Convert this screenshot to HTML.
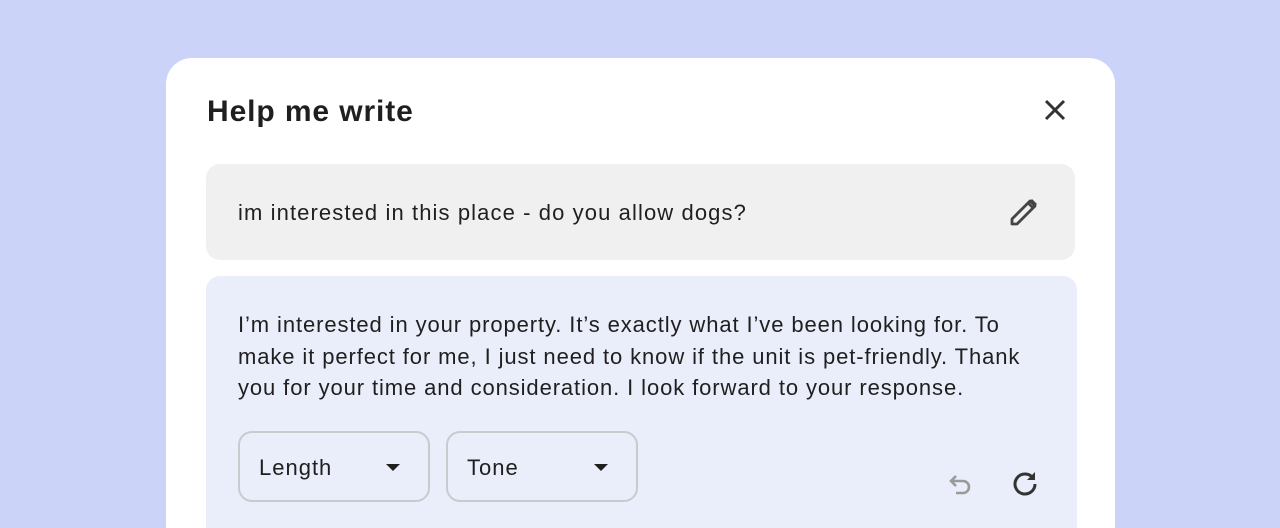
<!DOCTYPE html>
<html><head><style>
html,body{margin:0;width:1280px;height:528px;overflow:hidden}
body{background:#cbd3f9;font-family:"Liberation Sans",sans-serif;position:relative}
.card{position:absolute;left:166px;top:58px;width:949px;height:470px;background:#fff;border-radius:26px 26px 0 0}
.title{position:absolute;left:207px;top:95px;font-size:30px;font-weight:bold;color:#1f1f1f;letter-spacing:0.9px}
.inp{position:absolute;left:206px;top:164px;width:869px;height:96px;background:#f0f0f0;border-radius:14px}
.inp span{position:absolute;left:32px;top:36px;font-size:22px;color:#1f1f1f;letter-spacing:1.1px}
.resp{position:absolute;left:206px;top:276px;width:871px;height:252px;background:#eaeefa;border-radius:14px 14px 0 0}
.resp p{position:absolute;left:32px;top:33px;margin:0;width:815px;font-size:22px;line-height:31.5px;color:#1f1f1f;letter-spacing:0.9px}
.dd{position:absolute;top:155px;width:192px;height:71px;border:2px solid #c9cace;border-radius:14px;box-sizing:border-box}
.dd span{position:absolute;left:19px;top:22px;font-size:22px;color:#1f1f1f;letter-spacing:1px}
.dd i{position:absolute;right:28px;top:31px;width:0;height:0;border-left:7px solid transparent;border-right:7px solid transparent;border-top:7px solid #1f1f1f}
</style></head><body>
<div class="card"></div>
<div class="title">Help me write</div>
<svg style="position:absolute;left:1044px;top:99px" width="22" height="22" viewBox="0 0 22 22"><path d="M2 2L20 20M20 2L2 20" stroke="#333" stroke-width="3"/></svg>
<div class="inp"><span>im interested in this place - do you allow dogs?</span>
<svg style="position:absolute;left:802px;top:32px" width="32" height="32" viewBox="0 0 32 32"><path d="M4 28V23L22 5L27 10L9 28Z" fill="none" stroke="#444" stroke-width="2.8" stroke-linejoin="round"/><path d="M20 7L25 12" stroke="#444" stroke-width="2.6"/><path d="M22 5L24 3L29 8L27 10Z" fill="#444"/></svg>
</div>
<div class="resp"><p>I’m interested in your property. It’s exactly what I’ve been looking for. To make it perfect for me, I just need to know if the unit is pet-friendly. Thank you for your time and consideration. I look forward to your response.</p>
<div class="dd" style="left:32px"><span>Length</span><i></i></div>
<div class="dd" style="left:240px"><span>Tone</span><i></i></div>
<svg style="position:absolute;left:742px;top:195px" width="26" height="26" viewBox="0 0 26 26"><path d="M8 5L3 10L8 15" fill="none" stroke="#9a9a9a" stroke-width="2.6"/><path d="M3 10H15A6 6 0 0 1 15 22H8" fill="none" stroke="#9a9a9a" stroke-width="2.6"/></svg>
<svg style="position:absolute;left:805px;top:193px" width="28" height="28" viewBox="0 0 28 28"><path d="M22 9A10 10 0 1 0 24 15" fill="none" stroke="#333" stroke-width="3"/><path d="M24 3V11H16Z" fill="#333"/></svg>
</div>
</body></html>
